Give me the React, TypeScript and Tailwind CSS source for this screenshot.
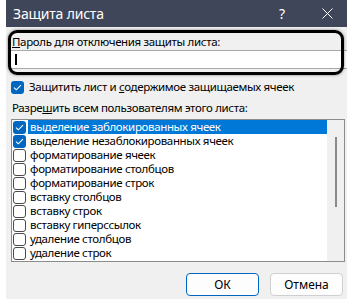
import React from 'react';

const font = { fontFamily: '"Noto Sans", "Open Sans", Arial, sans-serif' };

const items = [
  { label: 'выделение заблокированных ячеек', checked: true, selected: true },
  { label: 'выделение незаблокированных ячеек', checked: true },
  { label: 'форматирование ячеек' },
  { label: 'форматирование столбцов' },
  { label: 'форматирование строк' },
  { label: 'вставку столбцов' },
  { label: 'вставку строк' },
  { label: 'вставку гиперссылок' },
  { label: 'удаление столбцов' },
  { label: 'удаление строк' },
];

const Box: React.FC<{ checked?: boolean }> = ({ checked }) =>
  checked ? (
    <div className="flex h-[13px] w-[13px] shrink-0 items-center justify-center rounded-[3px] bg-[#0067c0]">
      <svg width="9" height="7" viewBox="0 0 9 7" fill="none">
        <path d="M1 3.6 L3.3 5.8 L8 1.2" stroke="white" strokeWidth="1.1" />
      </svg>
    </div>
  ) : (
    <div className="h-[13px] w-[13px] shrink-0 rounded-[3px] border border-[#4a4a4a] bg-white" />
  );

export default function App() {
  return (
    <div className="h-[299px] w-[355px] bg-white pl-[6px] text-[11.5px] tracking-[-0.35px] text-black" style={font}>
      <div className="flex h-full w-[341px] flex-col bg-[#f0f0f0]">
        {/* заголовок окна */}
        <div className="flex h-[27px] shrink-0 items-center bg-[#40465a] pl-[7px] pr-[14px] text-[14px] tracking-[-0.2px] text-white">
          <span>Защита листа</span>
          <span className="ml-auto mr-[37px]">?</span>
          <svg width="11" height="11" viewBox="0 0 11 11">
            <path d="M0.5 0.5 L10.5 10.5 M10.5 0.5 L0.5 10.5" stroke="white" strokeWidth="1" />
          </svg>
        </div>

        <div className="relative flex flex-1 flex-col px-[5px]">
          {/* рамка-выделение поверх поля пароля */}
          <div className="pointer-events-none absolute left-[2px] top-[3px] h-[45px] w-[336px] rounded-[9px] border-[3px] border-black shadow-[0_0_3px_rgba(0,0,0,0.5)]" />

          <div className="mt-[7px] h-[16px] pl-[1px] leading-[16px]">
            <span className="underline">П</span>ароль для отключения защиты листа:
          </div>
          <div className="flex h-[19px] w-[336px] items-center border-y border-[#a8a8a8] bg-white pl-[4px]">
            <div className="h-[11px] w-[2px] bg-black" />
          </div>

          <div className="mt-[11px] flex h-[14px] items-center gap-[5px]">
            <Box checked />
            <span className="leading-[14px]">
              Защитить лист и <span className="underline">с</span>одержимое защищаемых ячеек
            </span>
          </div>

          <div className="mt-[6px] h-[16px] pl-[1px] leading-[16px]">
            Разре<span className="underline">ш</span>ить всем пользователям этого листа:
          </div>

          <div className="mt-[3px] flex h-[143px] w-[334px] border border-[#8c8c8c] bg-white">
            <div className="flex flex-1 flex-col leading-[14px]">
              {items.map((it) => (
                <div key={it.label} className="flex h-[14px] items-center pl-[1px]">
                  <Box checked={it.checked} />
                  <div
                    className={
                      it.selected
                        ? 'ml-[2px] flex h-[14px] flex-1 items-center bg-[#0078d7] pl-[2px] text-white'
                        : 'ml-[2px] flex h-[14px] flex-1 items-center pl-[2px]'
                    }
                  >
                    {it.label}
                  </div>
                </div>
              ))}
            </div>
            <div className="flex w-[17px] justify-center bg-[#f0f0f0] pt-[17px]">
              <div className="h-[70px] w-[2px] bg-[#8a8a8a]" />
            </div>
          </div>

          <div className="mt-auto mb-[3px] flex justify-end gap-[11px]">
            <button className="h-[23px] w-[73px] rounded-[4px] border border-[#0067c0] bg-[#fdfdfd] text-[12px] tracking-normal">
              ОК
            </button>
            <button className="mr-[-1px] h-[23px] w-[73px] rounded-[4px] border border-[#d0d0d0] bg-[#fdfdfd] text-[12px] tracking-normal">
              Отмена
            </button>
          </div>
        </div>
      </div>
    </div>
  );
}
